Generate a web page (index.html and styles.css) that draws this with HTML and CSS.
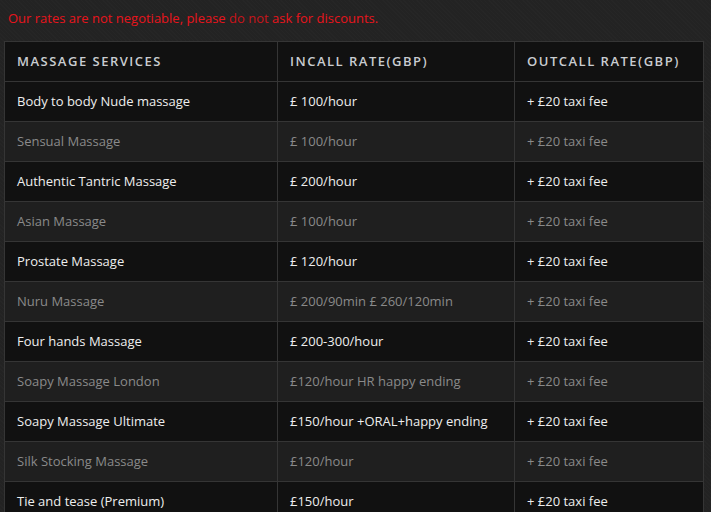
FILE: index.html
```html
<!DOCTYPE html>
<html lang="en">
<head>
<meta charset="utf-8">
<title>Rates</title>
<link rel="stylesheet" href="styles.css">
</head>
<body>
<p class="notice">Our rates are not negotiable, please <span class="dark">do not</span> ask for discounts.</p>
<table class="rates">
  <thead>
    <tr><th class="c1">Massage Services</th><th class="c2">Incall Rate(GBP)</th><th class="c3">Outcall Rate(GBP)</th></tr>
  </thead>
  <tbody>
    <tr><td>Body to body Nude massage</td><td>£ 100/hour</td><td>+ £20 taxi fee</td></tr>
    <tr><td>Sensual Massage</td><td>£ 100/hour</td><td>+ £20 taxi fee</td></tr>
    <tr><td>Authentic Tantric Massage</td><td>£ 200/hour</td><td>+ £20 taxi fee</td></tr>
    <tr><td>Asian Massage</td><td>£ 100/hour</td><td>+ £20 taxi fee</td></tr>
    <tr><td>Prostate Massage</td><td>£ 120/hour</td><td>+ £20 taxi fee</td></tr>
    <tr><td>Nuru Massage</td><td>£ 200/90min £ 260/120min</td><td>+ £20 taxi fee</td></tr>
    <tr><td>Four hands Massage</td><td>£ 200-300/hour</td><td>+ £20 taxi fee</td></tr>
    <tr><td>Soapy Massage London</td><td>£120/hour HR happy ending</td><td>+ £20 taxi fee</td></tr>
    <tr><td>Soapy Massage Ultimate</td><td>£150/hour +ORAL+happy ending</td><td>+ £20 taxi fee</td></tr>
    <tr><td>Silk Stocking Massage</td><td>£120/hour</td><td>+ £20 taxi fee</td></tr>
    <tr><td>Tie and tease (Premium)</td><td>£150/hour</td><td>+ £20 taxi fee</td></tr>
  </tbody>
</table>
</body>
</html>
```
FILE: styles.css
```css
html, body {
  margin: 0;
  padding: 0;
}
body {
  background-color: #232323;
  background-image: repeating-linear-gradient(45deg, rgba(255,255,255,0.012) 0 1px, transparent 1px 3px);
  font-family: "Open Sans", "DejaVu Sans", sans-serif;
  font-size: 13px;
  padding: 0 7px 0 4px;
}
.notice {
  margin: 0;
  padding: 9px 4px 13px;
  color: #e8141c;
  line-height: 19px;
}
.notice .dark {
  color: #c8141a;
}
.rates {
  width: 700px;
  border-collapse: collapse;
  border: 1px solid #3a3a3a;
}
.rates th, .rates td {
  border: 1px solid #353535;
  text-align: left;
  padding: 0 12px 2px;
  height: 37px;
  line-height: 20px;
  white-space: nowrap;
}
.rates th {
  background: #111;
  color: #c9ccd0;
  font-weight: 600;
  text-transform: uppercase;
  letter-spacing: 1.5px;
}
.rates th.c1 { width: 248px; }
.rates th.c2 { width: 212px; }
.rates tbody tr:nth-child(odd) td {
  background: #111;
  color: #eeeeee;
}
.rates tbody tr:nth-child(even) td {
  background: #1f1f1f;
  color: #8a8a8a;
}
```
